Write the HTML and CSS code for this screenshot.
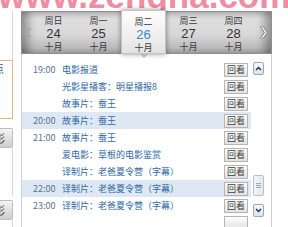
FILE: index.html
```html
<!DOCTYPE html>
<html lang="zh">
<head>
<meta charset="utf-8">
<title>节目单</title>
<link rel="stylesheet" href="styles.css">
</head>
<body>
<div class="page">
  <aside class="side">
    <div class="side-top"></div>
    <div class="side-box side-box--active"><span class="side-label side-label--link">点</span></div>
    <div class="side-gap"></div>
    <div class="side-tab"><span class="side-label">影</span></div>
    <div class="side-box"></div>
    <div class="side-tab side-tab--second"><span class="side-label">影</span></div>
    <div class="side-box side-box--rest"></div>
  </aside>

  <section class="guide">
    <header class="days">
      <span class="nav nav--prev">
        <svg width="8" height="13" viewBox="0 0 8 13"><polyline points="6,1 2,6.5 6,12" fill="none" stroke="#7a7a7a" stroke-width="3" stroke-linecap="round" stroke-linejoin="round"/><polyline points="6,1 2,6.5 6,12" fill="none" stroke="#f4f4f4" stroke-width="1.4" stroke-linecap="round" stroke-linejoin="round"/></svg>
      </span>
      <div class="day"><span class="day-week">周日</span><span class="day-num">24</span><span class="day-month">十月</span></div>
      <div class="day"><span class="day-week">周一</span><span class="day-num">25</span><span class="day-month">十月</span></div>
      <div class="day day--active"><span class="day-week">周二</span><span class="day-num">26</span><span class="day-month">十月</span></div>
      <div class="day"><span class="day-week">周三</span><span class="day-num">27</span><span class="day-month">十月</span></div>
      <div class="day"><span class="day-week">周四</span><span class="day-num">28</span><span class="day-month">十月</span></div>
      <span class="nav nav--next">
        <svg width="8" height="13" viewBox="0 0 8 13"><polyline points="2,1 6,6.5 2,12" fill="none" stroke="#7a7a7a" stroke-width="3" stroke-linecap="round" stroke-linejoin="round"/><polyline points="2,1 6,6.5 2,12" fill="none" stroke="#f4f4f4" stroke-width="1.4" stroke-linecap="round" stroke-linejoin="round"/></svg>
      </span>
    </header>

    <div class="schedule">
      <ul class="rows">
        <li class="row"><span class="time">19:00</span><span class="title">电影报道</span><span class="replay">回看</span></li>
        <li class="row"><span class="time"></span><span class="title">光影星播客：明星播报8</span><span class="replay">回看</span></li>
        <li class="row"><span class="time"></span><span class="title">故事片：蚕王</span><span class="replay">回看</span></li>
        <li class="row row--hl"><span class="time">20:00</span><span class="title">故事片：蚕王</span><span class="replay">回看</span></li>
        <li class="row"><span class="time">21:00</span><span class="title">故事片：蚕王</span><span class="replay">回看</span></li>
        <li class="row"><span class="time"></span><span class="title">爱电影：草根的电影鉴赏</span><span class="replay">回看</span></li>
        <li class="row"><span class="time"></span><span class="title">译制片：老爸夏令营（字幕）</span><span class="replay">回看</span></li>
        <li class="row row--hl"><span class="time">22:00</span><span class="title">译制片：老爸夏令营（字幕）</span><span class="replay">回看</span></li>
        <li class="row"><span class="time">23:00</span><span class="title">译制片：老爸夏令营（字幕）</span><span class="replay">回看</span></li>
        <li class="row"><span class="time"></span><span class="title"></span><span class="replay replay--cut"></span></li>
      </ul>
      <div class="scrollbar">
        <span class="sb-btn"><svg width="7" height="5" viewBox="0 0 7 5"><polyline points="1,4 3.5,1.5 6,4" fill="none" stroke="#1f3550" stroke-width="1.5"/></svg></span>
        <span class="sb-track"><span class="sb-thumb"><span class="sb-grip"></span></span></span>
        <span class="sb-btn"><svg width="7" height="5" viewBox="0 0 7 5"><polyline points="1,1 3.5,3.5 6,1" fill="none" stroke="#1f3550" stroke-width="1.5"/></svg></span>
      </div>
    </div>
  </section>

  <div class="watermark">www.zengha.com</div>
</div>
</body>
</html>
```

FILE: styles.css
```css
html, body {
  margin: 0;
  padding: 0;
  background: #fff;
}

body {
  font-family: "Noto Sans CJK SC", "Liberation Sans", sans-serif;
  color: #333;
}

.page {
  position: relative;
  width: 288px;
  height: 227px;
  overflow: hidden;
  display: flex;
}

/* left column (partially visible) */
.side {
  width: 13px;
  flex: none;
  display: flex;
  flex-direction: column;
  padding-top: 11px;
  overflow: hidden;
}

.side-top {
  height: 49px;
  border-right: 1px solid #d6d6d6;
}

.side-box {
  height: 48px;
  border-right: 1px solid #d6d6d6;
  overflow: hidden;
}

.side-box--active {
  height: 57px;
  border: 1px solid #dcb68a;
  border-left: none;
}

.side-box--rest {
  flex: 1;
}

.side-gap {
  height: 9px;
}

.side-tab {
  height: 18px;
  border: 1px solid #bdbdbd;
  border-left: none;
  border-radius: 0 2px 2px 0;
  background: linear-gradient(#f4f4f4, #cdcdcd);
  overflow: hidden;
}

.side-tab--second {
  margin-top: 4px;
}

.side-label {
  display: block;
  margin-left: -6px;
  font-size: 11px;
  line-height: 18px;
  white-space: nowrap;
  color: #3a3a3a;
}

.side-label--link {
  color: #2f5f9c;
  line-height: 14px;
  margin-left: -7px;
}

/* main guide */
.guide {
  position: relative;
  z-index: 2;
  margin-left: 8px;
  width: 251px;
  flex: none;
  display: flex;
  flex-direction: column;
  padding-top: 11px;
}

.days {
  height: 45px;
  box-sizing: border-box;
  display: flex;
  border: 1px solid #8e8e8e;
  background: linear-gradient(#bdbdbd 0%, #dedede 18%, #d8d8d8 55%, #bcbcbc 85%, #a4a4a4 100%);
  box-shadow: inset 12px 0 10px -6px rgba(0, 0, 0, 0.35), inset -12px 0 10px -6px rgba(0, 0, 0, 0.35);
}

.nav {
  display: flex;
  align-items: center;
  justify-content: center;
}

.nav--prev {
  width: 9px;
  padding-left: 4px;
  box-sizing: border-box;
}

.nav--next {
  width: 15px;
}

.day {
  width: 45px;
  flex: none;
  display: flex;
  flex-direction: column;
  align-items: center;
  padding-top: 3px;
  box-sizing: border-box;
}

.day-week,
.day-month {
  font-size: 9px;
  line-height: 11px;
  color: #3a3a3a;
}

.day-num {
  font-family: "Liberation Sans", sans-serif;
  font-size: 13px;
  line-height: 15px;
  color: #333;
}

.day--active {
  position: relative;
  margin: -2px 0 -1px;
  padding-top: 5px;
  background: linear-gradient(#fefefe, #ececec 70%, #e2e2e2);
  border: 1px solid #c4c4c4;
  box-shadow: 0 0 5px rgba(0, 0, 0, 0.45);
  z-index: 1;
}

.day--active .day-num {
  color: #3b84cc;
}

.day--active::after {
  content: "";
  position: absolute;
  left: 50%;
  bottom: -5px;
  margin-left: -4px;
  width: 0;
  height: 0;
  border-left: 4px solid transparent;
  border-right: 4px solid transparent;
  border-top: 4px solid #b8b8b8;
}

/* schedule list */
.schedule {
  flex: 1;
  display: flex;
  background: #fff;
  border-left: 1px solid #cfcfcf;
  border-right: 1px solid #cfcfcf;
}

.rows {
  width: 229px;
  flex: none;
  list-style: none;
  margin: 0;
  padding: 7px 0 0;
}

.row {
  height: 17px;
  display: flex;
  align-items: center;
  padding-left: 11px;
  font-size: 9px;
  line-height: 17px;
  white-space: nowrap;
}

.row--hl {
  background: #dde8f4;
}

.time {
  width: 29px;
  flex: none;
  color: #59728f;
}

.title {
  flex: 1;
  color: #2f68a4;
  overflow: hidden;
}

.replay {
  width: 24px;
  height: 14px;
  flex: none;
  box-sizing: border-box;
  margin-right: 3px;
  border: 1px solid #b4b4b4;
  background: linear-gradient(#fdfdfd, #e2e2e2);
  font-size: 9px;
  line-height: 12px;
  text-align: center;
  color: #3c3c3c;
}

.scrollbar {
  width: 20px;
  flex: none;
  display: flex;
  flex-direction: column;
  padding: 8px 0 0 2px;
  box-sizing: border-box;
}

.sb-btn {
  width: 11px;
  height: 13px;
  box-sizing: border-box;
  border: 1px solid #9ba7b4;
  border-radius: 2px;
  background: linear-gradient(#f6f8fb, #dbe3ec);
  display: flex;
  align-items: center;
  justify-content: center;
}

.sb-track {
  height: 129px;
  display: flex;
  flex-direction: column;
}

.sb-thumb {
  margin-top: 100px;
  width: 11px;
  height: 21px;
  box-sizing: border-box;
  border: 1px solid #b7c0ca;
  border-radius: 2px;
  background: linear-gradient(90deg, #f3f6f9, #e3e9ef);
  display: flex;
  align-items: center;
  justify-content: center;
}

.sb-grip {
  width: 5px;
  height: 5px;
  background: repeating-linear-gradient(#9aa6b3 0 1px, transparent 1px 2px);
}

/* watermark overlay */
.watermark {
  position: absolute;
  z-index: 1;
  top: -22px;
  left: -2px;
  font-family: "Liberation Sans", sans-serif;
  font-weight: bold;
  font-size: 35px;
  line-height: 35px;
  color: #ef8da3;
  white-space: nowrap;
  pointer-events: none;
}
```
